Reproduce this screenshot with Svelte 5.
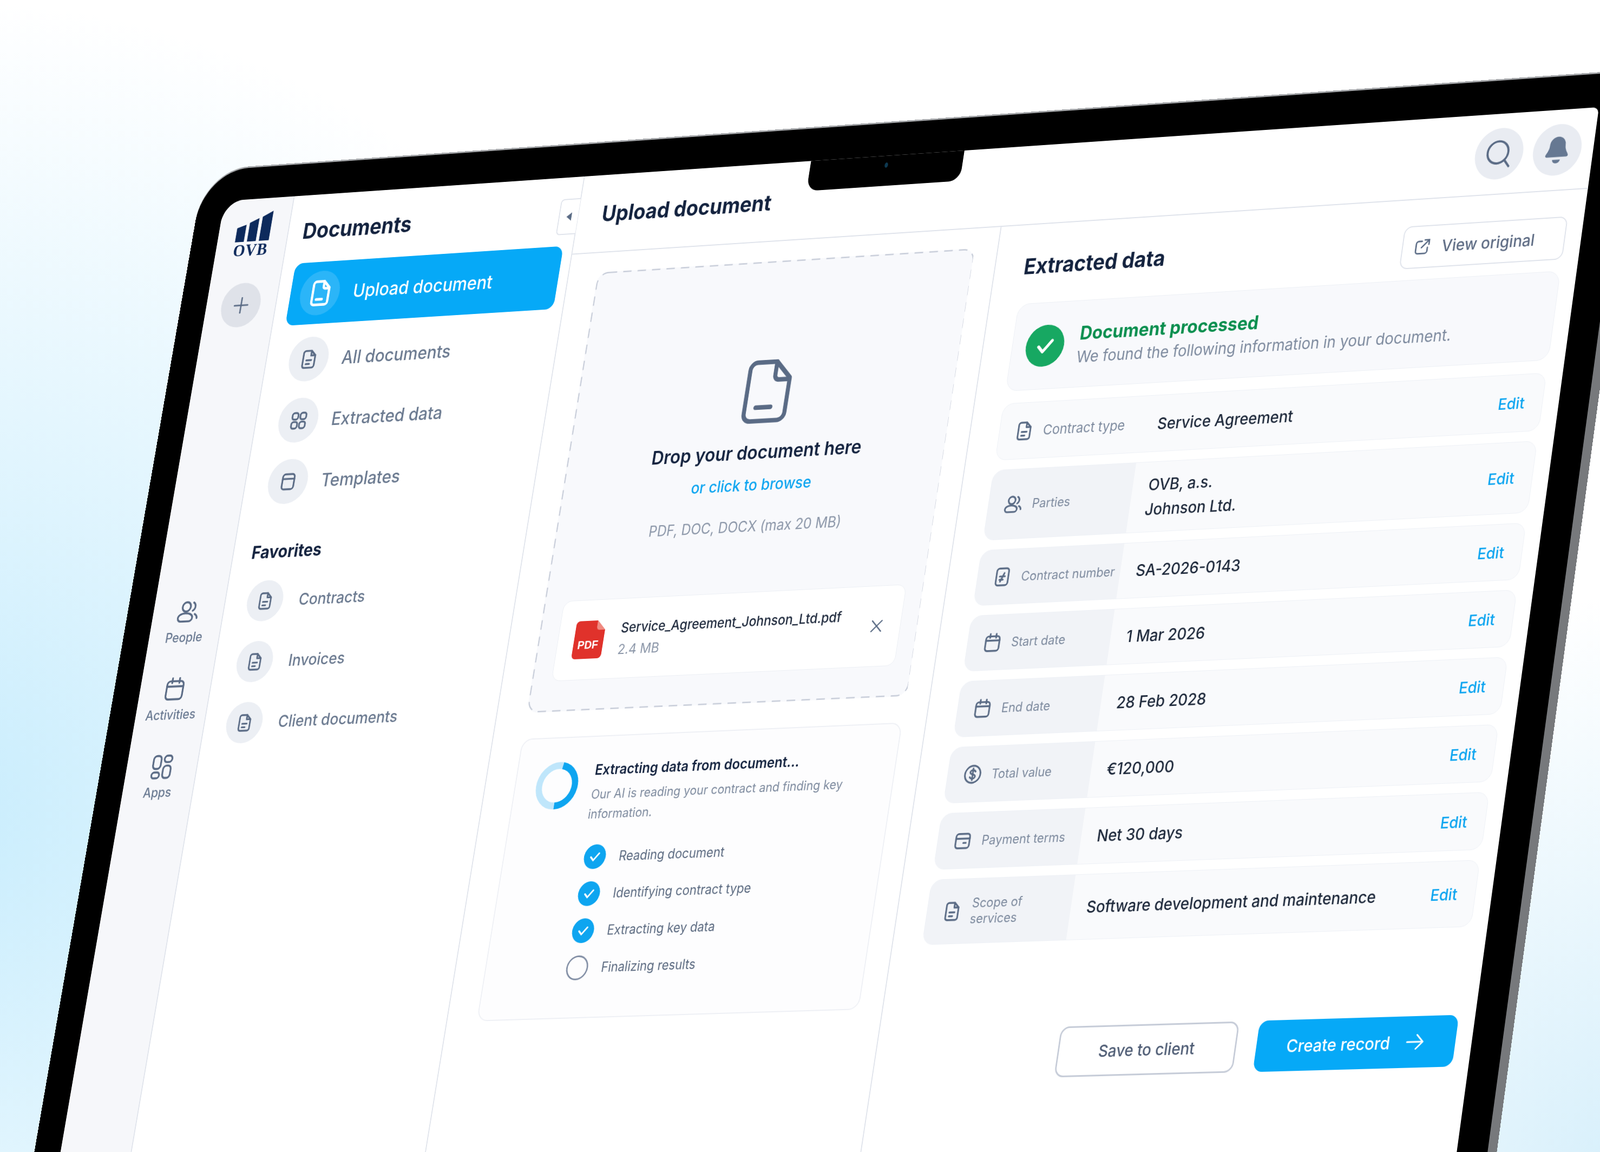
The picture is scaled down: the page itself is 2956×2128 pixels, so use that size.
<script>
    // flat size of the laptop screen, and where its corners land on the page
    const W = 2900
    const H = 1970
    const k = 2956 / 1568
    const quad = [[220, 197], [1567, 105], [1422, 1170], [47, 1200]].map(([x, y]) => [x * k, y * k])

    function toMatrix([[x0, y0], [x1, y1], [x2, y2], [x3, y3]]) {
        const dx1 = x1 - x2, dx2 = x3 - x2, sx = x0 - x1 + x2 - x3
        const dy1 = y1 - y2, dy2 = y3 - y2, sy = y0 - y1 + y2 - y3
        const den = dx1 * dy2 - dx2 * dy1
        const g = (sx * dy2 - dx2 * sy) / den
        const h = (dx1 * sy - sx * dy1) / den
        const a = x1 - x0 + g * x1, b = x3 - x0 + h * x3
        const d = y1 - y0 + g * y1, e = y3 - y0 + h * y3
        return `matrix3d(${a / W},${d / W},0,${g / W},${b / H},${e / H},0,${h / H},0,0,1,0,${x0},${y0},0,1)`
    }
    const deviceTransform = toMatrix(quad)

    const r = (x, y, w, h, q) =>
        `M${x + q} ${y}h${w - 2 * q}a${q} ${q} 0 0 1 ${q} ${q}v${h - 2 * q}a${q} ${q} 0 0 1 -${q} ${q}h-${w - 2 * q}a${q} ${q} 0 0 1 -${q} -${q}v-${h - 2 * q}a${q} ${q} 0 0 1 ${q} -${q}z`
    const c = (x, y, q) => `M${x - q} ${y}a${q} ${q} 0 1 0 ${2 * q} 0a${q} ${q} 0 1 0 -${2 * q} 0z`

    const icons = {
        doc: ['M7.5 3h6.5l5 5v10.5a2.5 2.5 0 0 1-2.5 2.5h-9a2.5 2.5 0 0 1-2.5-2.5v-13a2.5 2.5 0 0 1 2.5-2.5z', 'M14 3v5h5', 'M9 13h6', 'M9 17h4'],
        page: ['M7.5 2.5h7l5.5 5.5v11.5a2.5 2.5 0 0 1-2.5 2.5h-10a2.5 2.5 0 0 1-2.5-2.5v-14.500a2.5 2.5 0 0 1 2.500-2.500z', 'M14.500 2.500v4.500a1.500 1.500 0 0 0 1.500 1.500h4', 'M9 17.500h5.500'],
        grid: [r(4, 4, 7, 7, 2.5), r(13.500, 4, 7, 7, 2.5), r(4, 13.500, 7, 7, 2.5), r(13.500, 13.500, 7, 7, 2.5)],
        template: [r(5, 4, 14, 16, 3), 'M5 9h14'],
        users: [c(10, 8, 4), 'M6 20.500h8a3 3 0 0 0 3-3c0-2.500-3-4-7-4s-7 1.500-7 4a3 3 0 0 0 3 3z', 'M16.500 4.500a4 4 0 0 1 0 7', 'M19 14.500c1.500.8 2.500 2 2.500 3.500'],
        calendar: [r(4, 5.500, 16, 15.500, 3), 'M4 10h16', 'M8.500 3v4', 'M15.500 3v4'],
        apps: [r(3.500, 3, 7.500, 11, 3), r(14, 3, 7.500, 5.500, 2.700), r(3.500, 17, 7.500, 5, 2.500), r(14, 11.500, 7.500, 10.500, 3)],
        dollar: [c(12, 12, 9), 'M15 9.200c-.6-1-1.700-1.500-3-1.500-1.800 0-3 .9-3 2.200 0 2.900 6 1.500 6 4.400 0 1.300-1.200 2.200-3 2.200-1.300 0-2.400-.5-3-1.500', 'M12 5.800v12.400'],
        number: [r(5, 3, 14, 18, 3), 'M9 11.500h6', 'M9 15h4', 'M14 8l-4 9'],
        card: [r(4, 5, 16, 15, 3), 'M4 10h16', 'M13 14.500h3'],
        external: ['M11 5.500h-4a3 3 0 0 0-3 3v8.500a3 3 0 0 0 3 3h8.500a3 3 0 0 0 3-3v-4', 'M14.500 4h5.500v5.500', 'M20 4l-9 9'],
        search: [c(11, 11, 8), 'M16.800 17l3.700 4.500'],
        x: ['M5 5l14 14', 'M19 5l-14 14'],
        arrow: ['M3 12h18', 'M14 4.500l7.500 7.500l-7.500 7.500'],
        plus: ['M12 4v16', 'M4 12h16'],
        check: ['M6.500 12.500l3.800 4l7.200-8.500']
    }

    const railItems = [
        { icon: 'users', label: 'People' },
        { icon: 'calendar', label: 'Activities' },
        { icon: 'apps', label: 'Apps' }
    ]
    const navItems = [
        { icon: 'doc', label: 'All documents' },
        { icon: 'grid', label: 'Extracted data' },
        { icon: 'template', label: 'Templates' }
    ]
    const favorites = ['Contracts', 'Invoices', 'Client documents']
    const steps = [
        { label: 'Reading document', done: true },
        { label: 'Identifying contract type', done: true },
        { label: 'Extracting key data', done: true },
        { label: 'Finalizing results', done: false }
    ]
    const fields = [
        { icon: 'doc', label: 'Contract type', value: ['Service Agreement'], kind: 'first' },
        { icon: 'users', label: 'Parties', value: ['OVB, a.s.', 'Johnson Ltd.'], kind: 'tall' },
        { icon: 'number', label: 'Contract number', value: ['SA-2026-0143'] },
        { icon: 'calendar', label: 'Start date', value: ['1 Mar 2026'] },
        { icon: 'calendar', label: 'End date', value: ['28 Feb 2028'] },
        { icon: 'dollar', label: 'Total value', value: ['€120,000'] },
        { icon: 'card', label: 'Payment terms', value: ['Net 30 days'] },
        { icon: 'doc', label: 'Scope of services', value: ['Software development and maintenance'], kind: 'last' }
    ]
</script>

{#snippet icon(name, size, width = 2)}
    <svg class="icon" viewBox="0 0 24 24" width={size} height={size} stroke-width={width}>
        {#each icons[name] as d}
            <path {d} />
        {/each}
    </svg>
{/snippet}

<div class="stage">
    <div class="device" style="transform: {deviceTransform};">
        <div class="bezel"></div>
        <div class="screen">
            <aside class="rail">
                <div class="logo">
                    <svg viewBox="0 0 66 50" width="78" height="58">
                        <path d="M0 26l17-5v29h-17z" />
                        <path d="M23 18l17-7v39h-17z" />
                        <path d="M46 9l19-9v50h-19z" />
                    </svg>
                    <span>OVB</span>
                </div>
                <button class="add">{@render icon('plus', 44, 1.700)}</button>
                <div class="rail-items">
                    {#each railItems as item}
                        <div class="rail-item">
                            {@render icon(item.icon, 54, 1.700)}
                            <span>{item.label}</span>
                        </div>
                    {/each}
                </div>
            </aside>

            <nav class="nav">
                <h2>Documents</h2>
                <div class="nav-active">
                    <span class="bubble active">{@render icon('page', 56, 2.200)}</span>
                    Upload document
                </div>
                {#each navItems as item}
                    <div class="nav-row">
                        <span class="bubble">{@render icon(item.icon, 44)}</span>
                        {item.label}
                    </div>
                {/each}
                <h3>Favorites</h3>
                {#each favorites as fav}
                    <div class="fav-row">
                        <span class="bubble small">{@render icon('doc', 40)}</span>
                        {fav}
                    </div>
                {/each}
                <div class="collapse"><i></i></div>
            </nav>

            <main class="main">
                <header class="top">
                    <h1>Upload document</h1>
                    <div class="top-actions">
                        <span class="round">{@render icon('search', 62, 1.600)}</span>
                        <span class="round">
                            <svg viewBox="0 0 24 24" width="62" height="62" fill="#667892">
                                <path d="M12 2.500a6 6 0 0 0-6 6c0 4-2 5.500-2.600 7.200-.3.8.3 1.500 1 1.500h15.200c.7 0 1.300-.7 1-1.500-.6-1.700-2.600-3.200-2.600-7.200a6 6 0 0 0-6-6z" />
                                <path d="M9 19.200a3 2.600 0 0 0 6 0z" />
                            </svg>
                        </span>
                    </div>
                </header>

                <div class="columns">
                    <section class="upload">
                        <div class="drop">
                            <svg class="dash" width="100%" height="100%">
                                <rect x="1.500" y="1.500" width="799" height="839" rx="22" />
                            </svg>
                            {@render icon('page', 138, 1.500)}
                            <p class="drop-title">Drop your document here</p>
                            <p class="drop-link">or click to browse</p>
                            <p class="drop-hint">PDF, DOC, DOCX (max 20 MB)</p>
                            <div class="file">
                                <svg class="pdf" viewBox="0 0 63 72" width="63" height="72">
                                    <path d="M8 0h37l18 18v46a8 8 0 0 1-8 8h-47a8 8 0 0 1-8-8v-56a8 8 0 0 1 8-8z" fill="#e0322b" />
                                    <path d="M45 0l18 18h-12a6 6 0 0 1-6-6z" fill="#f08a80" />
                                    <text x="31" y="53" text-anchor="middle">PDF</text>
                                </svg>
                                <div class="file-text">
                                    <span class="file-name">Service_Agreement_Johnson_Ltd.pdf</span>
                                    <span class="file-size">2.4 MB</span>
                                </div>
                                {@render icon('x', 34, 1.800)}
                            </div>
                        </div>

                        <div class="progress">
                            <div class="progress-head">
                                <svg class="spinner" viewBox="0 0 91 91" width="91" height="91">
                                    <circle cx="45.500" cy="45.500" r="38" stroke="#bfe6fb" />
                                    <circle cx="45.500" cy="45.500" r="38" stroke="#0ea5f0" pathLength="100" stroke-dasharray="47 53" transform="rotate(-80 45.500 45.500)" />
                                </svg>
                                <div>
                                    <p class="progress-title">Extracting data from document...</p>
                                    <p class="progress-text">Our AI is reading your contract and finding key information.</p>
                                </div>
                            </div>
                            <ul class="steps">
                                {#each steps as step}
                                    <li>
                                        <span class="tick" class:done={step.done}>
                                            {#if step.done}{@render icon('check', 36, 2.200)}{/if}
                                        </span>
                                        {step.label}
                                    </li>
                                {/each}
                            </ul>
                        </div>
                    </section>

                    <section class="data">
                        <div class="data-head">
                            <h2>Extracted data</h2>
                            <button class="view">{@render icon('external', 38, 1.800)} View original</button>
                        </div>
                        <div class="processed">
                            <span class="ok">{@render icon('check', 58, 2.400)}</span>
                            <div>
                                <p class="ok-title">Document processed</p>
                                <p class="ok-text">We found the following information in your document.</p>
                            </div>
                        </div>
                        <div class="fields">
                            {#each fields as f}
                                <div class="field {f.kind ?? ''}">
                                    <div class="field-label">
                                        {@render icon(f.icon, 42, 1.900)}
                                        <span>{f.label}</span>
                                    </div>
                                    <div class="field-value">
                                        {#each f.value as line}
                                            <span>{line}</span>
                                        {/each}
                                    </div>
                                    <a class="edit" href="#edit">Edit</a>
                                </div>
                            {/each}
                        </div>
                        <div class="actions">
                            <button class="save">Save to client</button>
                            <button class="create">Create record {@render icon('arrow', 40, 1.800)}</button>
                        </div>
                    </section>
                </div>
            </main>
            <div class="notch"><i></i></div>
        </div>
    </div>
</div>

<style>
    :global(body) {
        margin: 0;
        overflow: hidden;
    }

    .stage {
        position: relative;
        width: 2956px;
        height: 2128px;
        overflow: hidden;
        font-family: Inter, "Noto Sans", sans-serif;
        background:
            radial-gradient(1500px 1500px at -100px 1500px, #c9edfd 0%, rgba(201, 237, 253, 0.55) 45%, rgba(255, 255, 255, 0) 100%),
            radial-gradient(900px 1100px at 3000px 2200px, #d6effb 0%, rgba(214, 239, 251, 0) 100%),
            #fff;
    }

    .device {
        position: absolute;
        left: 0;
        top: 0;
        width: 2900px;
        height: 1970px;
        transform-origin: 0 0;
    }

    .bezel {
        position: absolute;
        inset: -63px -60px -120px -58px;
        background: #000;
        border-radius: 100px 60px 0 0;
        box-shadow: 18px 0 0 #77797c, 0 -3px 0 #a4a6a9;
    }

    .screen {
        position: relative;
        display: grid;
        grid-template-columns: 157px 638px 1fr;
        width: 100%;
        height: 100%;
        background: #fff;
        border-radius: 44px 12px 0 0;
        overflow: hidden;
    }

    .icon {
        fill: none;
        stroke: #5a6b85;
        stroke-linecap: round;
        stroke-linejoin: round;
        flex: none;
    }

    p,
    h1,
    h2,
    h3,
    ul {
        margin: 0;
        padding: 0;
    }

    button {
        font-family: inherit;
    }

    .rail {
        display: flex;
        flex-direction: column;
        align-items: center;
        background: #f6f7fa;
        border-right: 2px solid #dfe3eb;
    }

    .logo {
        display: flex;
        flex-direction: column;
        align-items: center;
        margin-top: 26px;
    }

    .logo svg {
        fill: #0d2a5c;
    }

    .logo span {
        font-family: "Liberation Serif", serif;
        font-weight: 700;
        font-size: 34px;
        line-height: 34px;
        letter-spacing: 1px;
        color: #0d2a5c;
    }

    .add {
        display: flex;
        align-items: center;
        justify-content: center;
        width: 87px;
        height: 87px;
        margin-top: 48px;
        padding: 0;
        border: none;
        border-radius: 50%;
        background: #dfe2e9;
    }

    .rail-items {
        display: flex;
        flex-direction: column;
        gap: 57px;
        margin-top: 526px;
    }

    .rail-item {
        display: flex;
        flex-direction: column;
        align-items: center;
        gap: 8px;
        font-size: 25px;
        line-height: 30px;
        font-weight: 500;
        color: #6a7a92;
    }

    .nav {
        position: relative;
        display: flex;
        flex-direction: column;
        padding: 0 20px 0 28px;
        border-right: 2px solid #dfe3eb;
        color: #6b7a90;
    }

    .nav h2 {
        height: 134px;
        padding: 46px 0 0 4px;
        box-sizing: border-box;
        font-size: 43px;
        line-height: 48px;
        font-weight: 700;
        color: #14233f;
    }

    .nav-active,
    .nav-row,
    .fav-row {
        display: flex;
        align-items: center;
        gap: 30px;
        padding-left: 22px;
        font-weight: 500;
    }

    .nav-active {
        height: 122px;
        flex: none;
        margin-bottom: 9px;
        border-radius: 18px;
        background: #06a9f7;
        color: #fff;
        font-size: 36px;
    }

    .nav-row {
        height: 119px;
        flex: none;
        font-size: 35px;
    }

    .fav-row {
        height: 117px;
        flex: none;
        gap: 35px;
        padding-left: 20px;
        font-size: 31px;
    }

    .nav h3 {
        margin-top: 40px;
        height: 72px;
        padding: 14px 0 0 12px;
        box-sizing: border-box;
        font-size: 34px;
        line-height: 44px;
        font-weight: 700;
        color: #14233f;
    }

    .bubble {
        display: flex;
        align-items: center;
        justify-content: center;
        flex: none;
        width: 87px;
        height: 87px;
        border-radius: 50%;
        background: #eceff4;
    }

    .bubble.small {
        width: 79px;
        height: 79px;
    }

    .bubble.active {
        background: #2bb5f8;
    }

    .bubble.active :global(.icon) {
        stroke: #fff;
    }

    .collapse {
        position: absolute;
        top: 42px;
        right: -1px;
        display: flex;
        align-items: center;
        justify-content: center;
        width: 40px;
        height: 66px;
        border: 2px solid #dfe3eb;
        border-right: none;
        border-radius: 8px 0 0 8px;
        background: #fff;
    }

    .collapse i {
        width: 0;
        height: 0;
        border: 8px solid transparent;
        border-left: none;
        border-right: 11px solid #5a6b85;
    }

    .main {
        display: flex;
        flex-direction: column;
    }

    .top {
        display: flex;
        align-items: center;
        justify-content: space-between;
        height: 152px;
        flex: none;
        box-sizing: border-box;
        padding: 0 24px 0 51px;
        border-bottom: 2px solid #dfe3eb;
    }

    .top h1 {
        font-size: 42px;
        font-weight: 700;
        color: #14233f;
    }

    .top-actions {
        display: flex;
        gap: 20px;
    }

    .round {
        display: flex;
        align-items: center;
        justify-content: center;
        width: 96px;
        height: 96px;
        border-radius: 50%;
        background: #e9ecf2;
    }

    .columns {
        display: grid;
        grid-template-columns: 913px 1fr;
        flex: 1;
    }

    .upload {
        display: flex;
        flex-direction: column;
        gap: 49px;
        padding: 38px 48px 0 63px;
        border-right: 2px solid #dfe3eb;
    }

    .drop {
        position: relative;
        display: flex;
        flex-direction: column;
        align-items: center;
        height: 842px;
        box-sizing: border-box;
        padding: 180px 35px 0 42px;
        border-radius: 22px;
        background: #f8f9fc;
    }

    .dash {
        position: absolute;
        inset: 0;
    }

    .dash rect {
        fill: none;
        stroke: #c6ccd8;
        stroke-width: 2.500;
        stroke-dasharray: 18 13;
    }

    .drop-title {
        margin-top: 26px;
        font-size: 36px;
        line-height: 44px;
        font-weight: 600;
        color: #14233f;
    }

    .drop-link {
        margin-top: 21px;
        font-size: 30px;
        line-height: 38px;
        font-weight: 500;
        color: #0ea5f0;
    }

    .drop-hint {
        margin-top: 42px;
        font-size: 28px;
        line-height: 36px;
        color: #8b96a8;
    }

    .file {
        display: flex;
        align-items: center;
        gap: 34px;
        align-self: stretch;
        height: 150px;
        margin-top: 107px;
        padding: 0 32px 0 34px;
        border: 1px solid #eceff4;
        border-radius: 18px;
        background: #fff;
    }

    .pdf {
        flex: none;
    }

    .pdf text {
        font-family: "Liberation Sans", sans-serif;
        font-size: 22px;
        font-weight: 700;
        fill: #fff;
    }

    .file-text {
        display: flex;
        flex-direction: column;
        gap: 5px;
        flex: 1;
    }

    .file-name {
        font-size: 26px;
        line-height: 36px;
        font-weight: 500;
        color: #1f2a3d;
    }

    .file-size {
        font-size: 26px;
        line-height: 36px;
        color: #8b96a8;
    }

    .progress {
        height: 529px;
        box-sizing: border-box;
        padding: 44px 40px 0 43px;
        border: 2px solid #eef0f5;
        border-radius: 22px;
        background: #fdfdfe;
    }

    .progress-head {
        display: flex;
        gap: 31px;
    }

    .spinner {
        flex: none;
        fill: none;
        stroke-width: 13;
    }

    .progress-title {
        margin-top: 2px;
        font-size: 27px;
        line-height: 34px;
        font-weight: 600;
        color: #14233f;
    }

    .progress-text {
        margin-top: 10px;
        font-size: 24px;
        line-height: 37px;
        color: #7d8a9e;
    }

    .steps {
        display: flex;
        flex-direction: column;
        gap: 23px;
        margin-top: 39px;
        padding-left: 128px;
        list-style: none;
    }

    .steps li {
        display: flex;
        align-items: center;
        gap: 28px;
        height: 46px;
        font-size: 25px;
        color: #5b6a80;
    }

    .tick {
        display: flex;
        align-items: center;
        justify-content: center;
        width: 46px;
        height: 46px;
        box-sizing: border-box;
        border: 3px solid #7f8ca3;
        border-radius: 50%;
    }

    .tick.done {
        border: none;
        background: #0ea5f0;
    }

    .tick.done :global(.icon) {
        stroke: #fff;
    }

    .data {
        display: flex;
        flex-direction: column;
        padding: 49px 32px 0 60px;
    }

    .data-head {
        display: flex;
        align-items: flex-start;
        justify-content: space-between;
        height: 80px;
    }

    .data-head h2 {
        font-size: 41px;
        line-height: 60px;
        font-weight: 700;
        color: #14233f;
    }

    .view {
        display: flex;
        align-items: center;
        gap: 20px;
        width: 326px;
        height: 80px;
        padding: 0 0 0 20px;
        border: 2px solid #dfe3eb;
        border-radius: 16px;
        background: #fff;
        font-size: 30px;
        font-weight: 500;
        color: #5e6c84;
    }

    .processed {
        display: flex;
        align-items: center;
        gap: 30px;
        height: 163px;
        margin-top: 21px;
        padding-left: 28px;
        border: 1px solid #edf0f5;
        border-radius: 24px;
        background: #f8f9fc;
    }

    .ok {
        display: flex;
        align-items: center;
        justify-content: center;
        flex: none;
        width: 79px;
        height: 79px;
        border-radius: 50%;
        background: #17a862;
    }

    .ok :global(.icon) {
        stroke: #fff;
    }

    .ok-title {
        font-size: 35px;
        line-height: 44px;
        font-weight: 700;
        color: #0a8f4f;
    }

    .ok-text {
        margin-top: 4px;
        font-size: 30px;
        line-height: 38px;
        color: #7d8a9e;
    }

    .fields {
        display: flex;
        flex-direction: column;
        gap: 18px;
        margin-top: 23px;
    }

    .field {
        display: flex;
        height: 102px;
        overflow: hidden;
        border: 1px solid #eef1f6;
        border-radius: 22px;
        background: #f9fafc;
    }

    .field.first {
        height: 105px;
    }

    .field.tall {
        height: 130px;
    }

    .field.last {
        height: 118px;
    }

    .field-label {
        display: flex;
        align-items: center;
        gap: 18px;
        flex: none;
        width: 293px;
        box-sizing: border-box;
        padding-left: 30px;
        background: #f1f3f7;
        font-size: 24px;
        color: #7d8a9e;
    }

    .field.first .field-label {
        background: transparent;
        font-size: 26px;
    }

    .field-value {
        display: flex;
        flex-direction: column;
        justify-content: center;
        flex: 1;
        padding-left: 32px;
        font-size: 30px;
        line-height: 46px;
        font-weight: 500;
        color: #1e293b;
    }

    .edit {
        align-self: center;
        padding-right: 35px;
        font-size: 29px;
        font-weight: 500;
        color: #0ea5f0;
        text-decoration: none;
    }

    .actions {
        display: flex;
        justify-content: flex-end;
        gap: 40px;
        margin-top: 157px;
    }

    .actions button {
        display: flex;
        align-items: center;
        justify-content: center;
        height: 92px;
        border-radius: 18px;
        font-weight: 500;
    }

    .save {
        width: 358px;
        border: 3px solid #c6ccd8;
        background: #fff;
        font-size: 30px;
        color: #4f5d75;
    }

    .create {
        width: 392px;
        gap: 28px;
        border: none;
        background: #06a9f7;
        font-size: 31px;
        color: #fff;
    }

    .create :global(.icon) {
        stroke: #fff;
    }

    .notch {
        position: absolute;
        top: 0;
        left: 1281px;
        display: flex;
        align-items: center;
        justify-content: center;
        width: 324px;
        height: 58px;
        border-radius: 0 0 24px 24px;
        background: #000;
    }

    .notch i {
        width: 7px;
        height: 10px;
        margin-bottom: 22px;
        border-radius: 50%;
        background: #0e3a52;
    }
</style>
